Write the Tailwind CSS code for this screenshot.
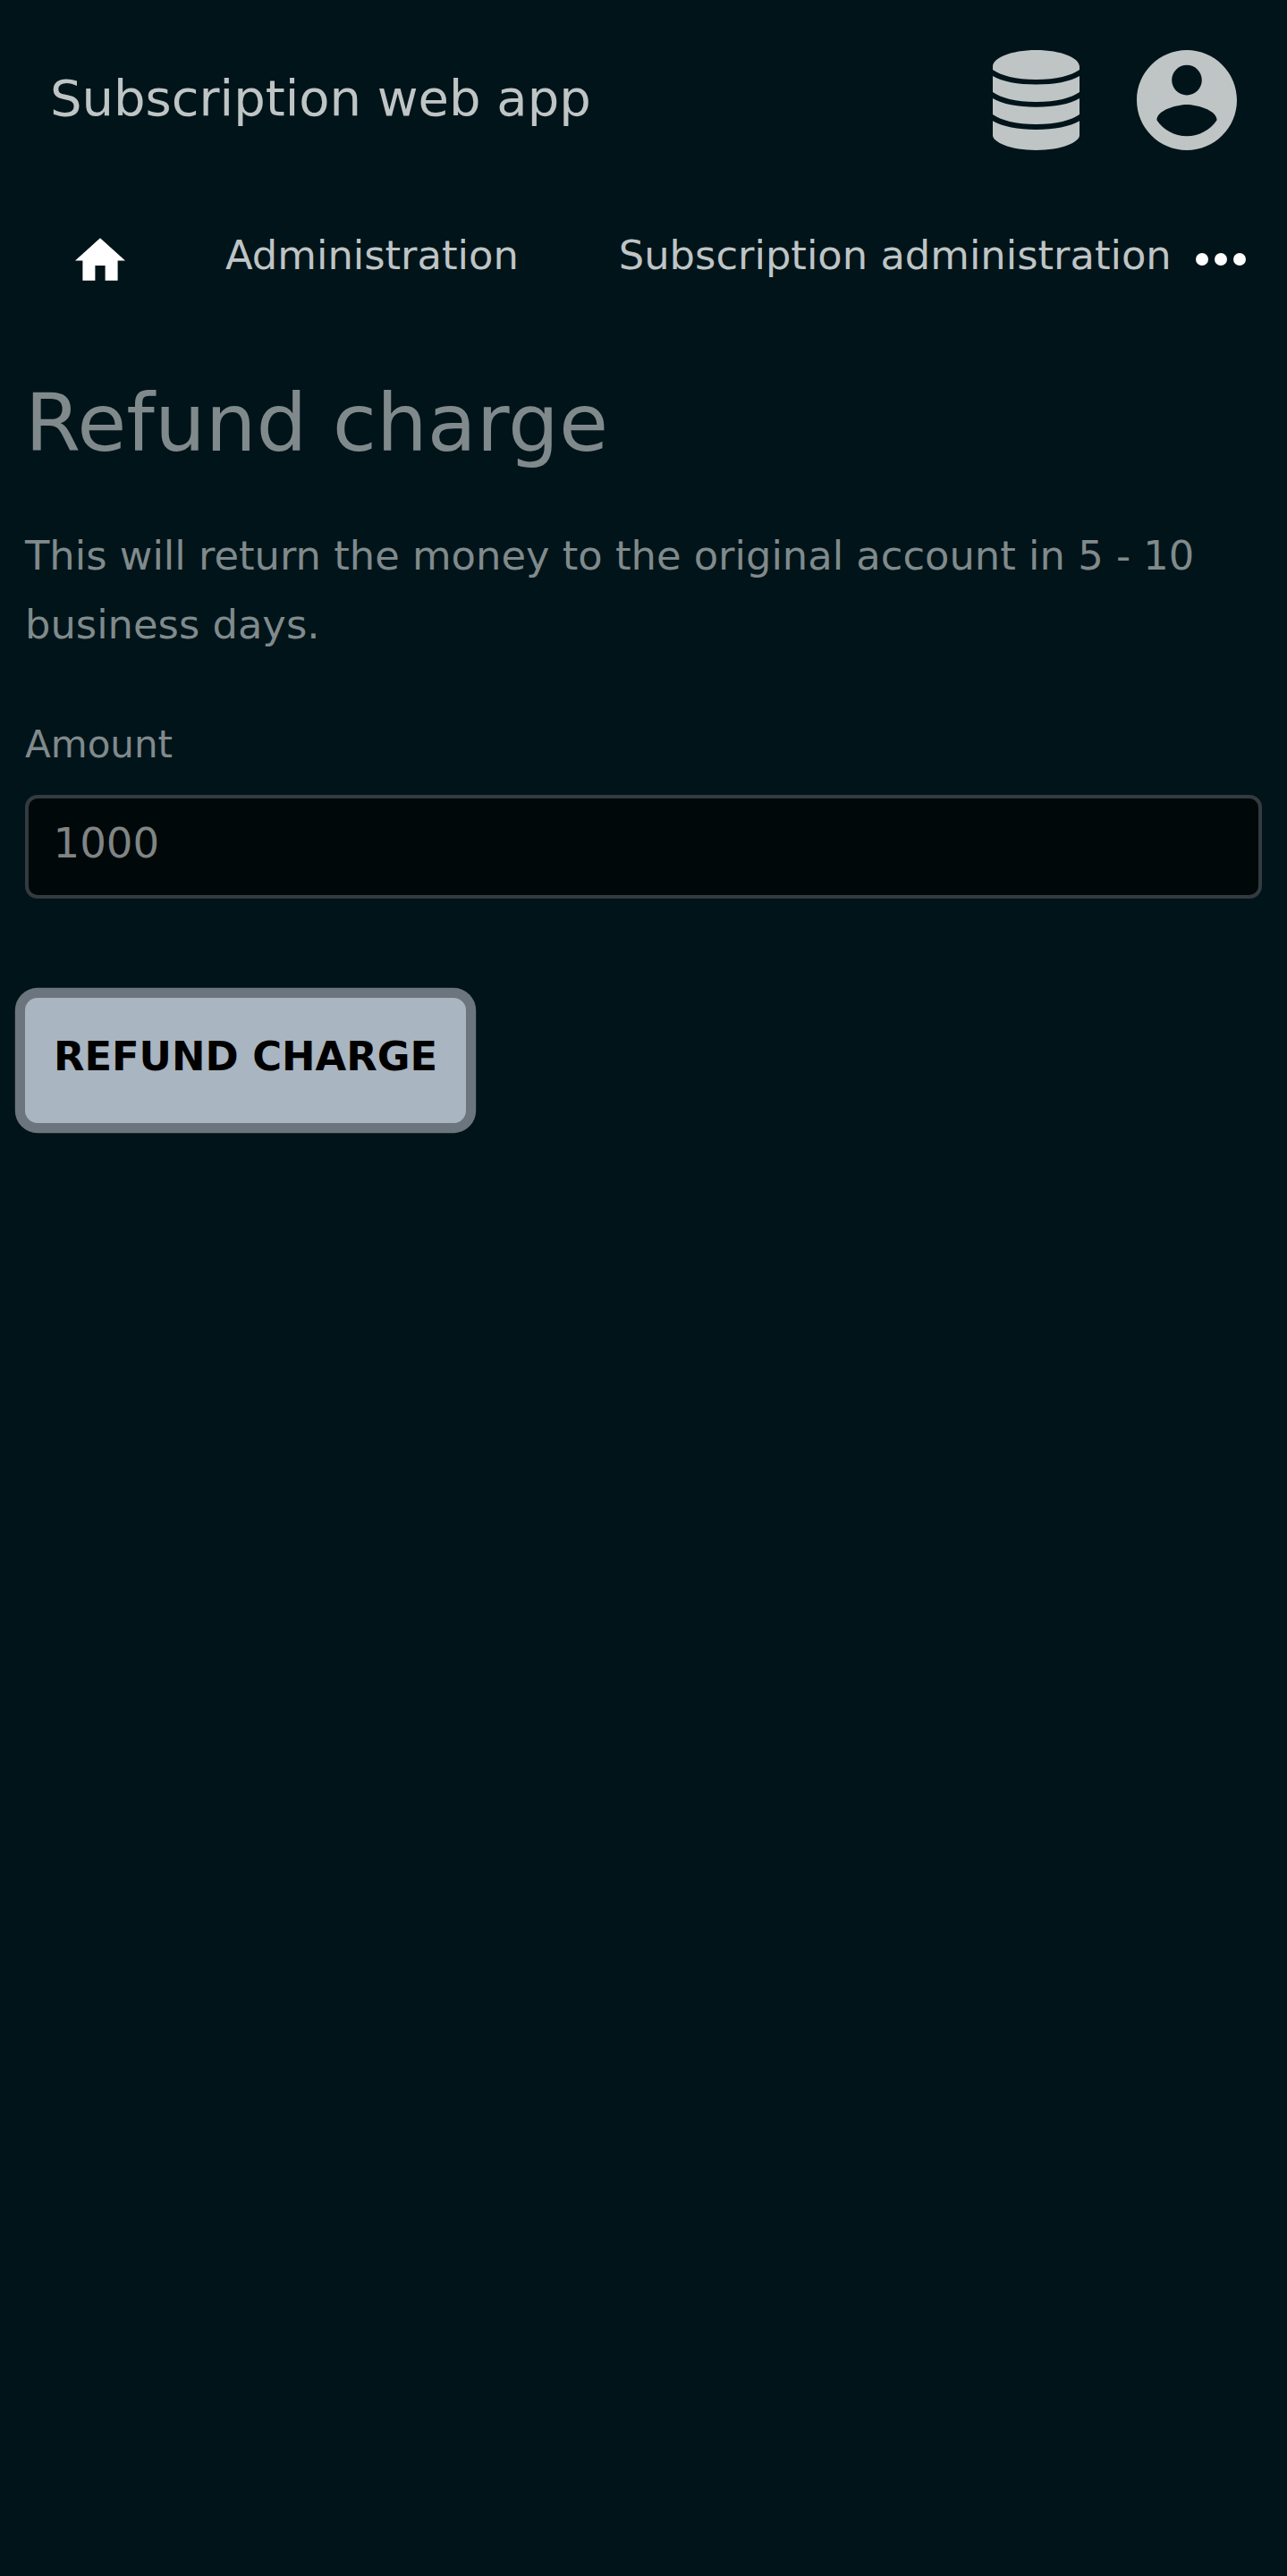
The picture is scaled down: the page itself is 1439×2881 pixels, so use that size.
<!DOCTYPE html>
<html lang="en"><head><meta charset="utf-8"><title>Subscription web app</title><script src="https://cdn.jsdelivr.net/npm/@tailwindcss/browser@4"></script></head>
<body class="bg-[#001419] min-h-screen font-['DejaVu_Sans',sans-serif] text-[#808a8c] overflow-hidden">
<header class="h-[224px] px-14 flex items-center justify-between text-[#bfc4c5]">
<span class="text-[56px] leading-none whitespace-nowrap pb-[5px]">Subscription web app</span>
<div class="flex items-center gap-[64px]">
<svg class="w-[97px] h-[112px]" viewBox="0 0 97 112" fill="currentColor"><path d="M0 18.5C0 9 20 0 48.500 0S97 9 97 18.500V22C88 28.500 71 33 48.500 33S9 28.500 0 22zM0 29C11 35.500 28 38.500 48.500 38.500S86 35.500 97 29V47C88 53.500 71 58 48.500 58S9 53.500 0 47zM0 54C11 60.500 28 63.700 48.500 63.700S86 60.500 97 54V72C88 78.500 71 83 48.500 83S9 78.500 0 72zM0 79.300C11 85.500 28 89 48.500 89S86 85.500 97 79.300V95.300C97 103 77 112 48.500 112S0 103 0 95.300z"/></svg>
<svg class="w-28 h-28" viewBox="2 2 20 20" fill="currentColor"><path d="M12 2C6.480 2 2 6.480 2 12s4.480 10 10 10 10-4.480 10-10S17.520 2 12 2zm0 3c1.660 0 3 1.340 3 3s-1.340 3-3 3-3-1.340-3-3 1.340-3 3-3zm0 14.200c-2.500 0-4.710-1.280-6-3.220.03-1.990 4-3.080 6-3.080 1.990 0 5.970 1.090 6 3.080-1.290 1.940-3.500 3.220-6 3.220z"/></svg>
</div></header>
<nav class="h-[130px] pl-[84px] pr-[46px] flex text-[44.8px] leading-[123px] text-[#bfc4c5] whitespace-nowrap">
<svg class="w-14 h-12 mt-[42px] mr-28 shrink-0 text-white" viewBox="2 3 20 17" fill="currentColor"><path d="M10 20v-6h4v6h5v-8h3L12 3 2 12h3v8z"/></svg>
<span class="mr-28">Administration</span><span>Subscription administration</span>
<svg class="w-14 h-4 mt-[58px] ml-auto shrink-0 text-white" viewBox="0 0 56 16" fill="currentColor"><circle cx="7" cy="8" r="7"/><circle cx="28" cy="8" r="7"/><circle cx="49" cy="8" r="7"/></svg>
</nav>
<main class="px-7">
<h1 class="text-[89.6px] leading-[120px] mt-[59px]">Refund charge</h1>
<p class="text-[44.8px] leading-[77px] mt-[50px]">This will return the money to the original account in 5 - 10 business days.</p>
<label class="block text-[42px] leading-[61px] mt-[65px]">Amount</label>
<div class="h-[115.500px] border-4 border-[#343a40] rounded-[14px] bg-[#00080a] mt-[26px] px-[27.500px] text-[46.67px] leading-[100px] text-[#808584]">1000</div>
<button class="block mt-[111.500px] h-[140px] px-[31.900px] pb-[7px] rounded-[14px] bg-[#a9b5c1] text-black font-bold text-[44.8px] ring-[11.2px] ring-[#6c757d] leading-none">REFUND CHARGE</button>
</main></body></html>
